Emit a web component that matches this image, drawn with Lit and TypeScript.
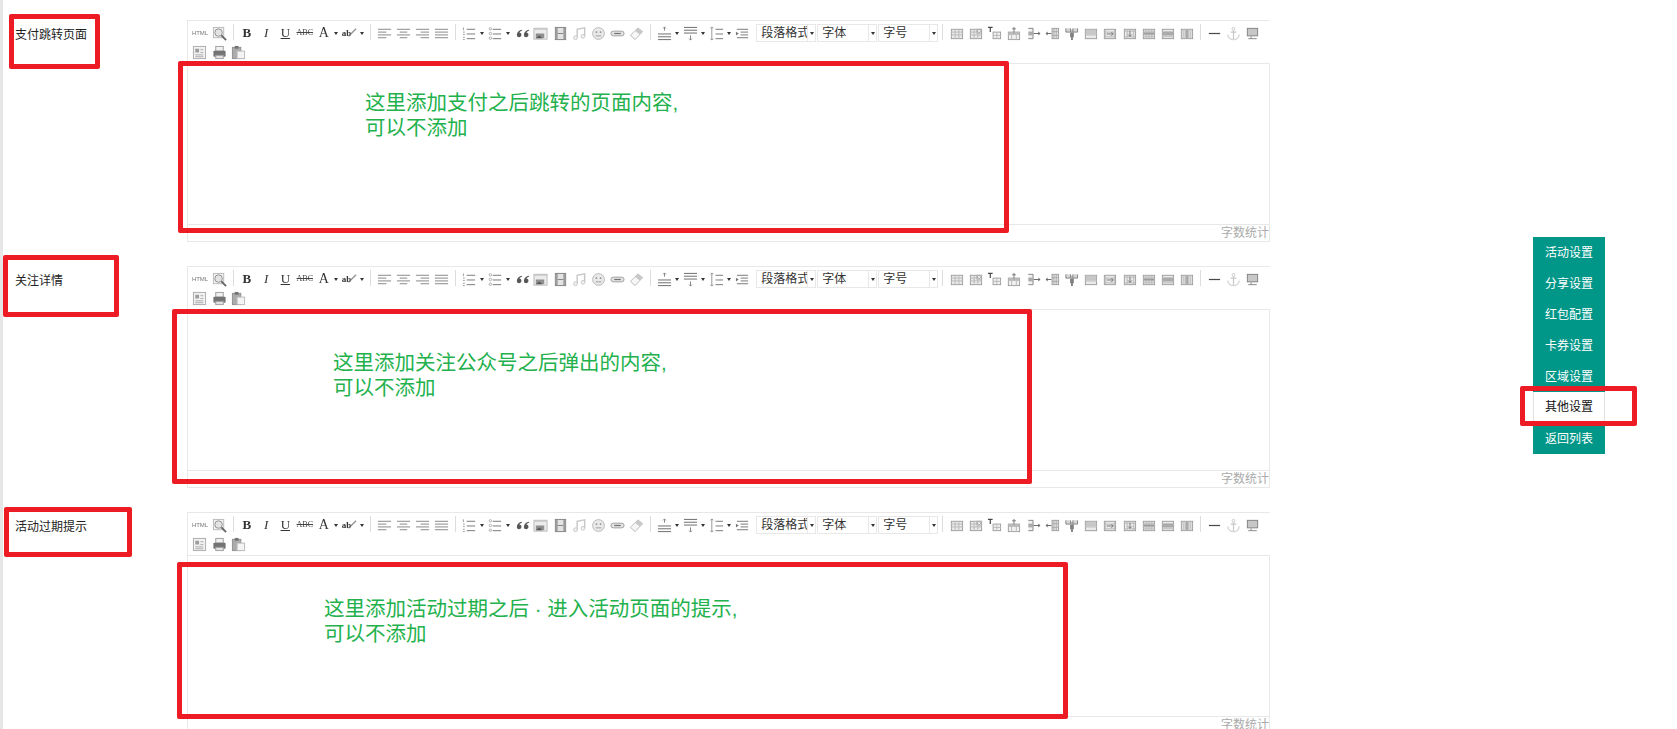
import { LitElement, html, css, svg } from "lit";
import { customElement } from "lit/decorators.js";

const lines = (ys: number[], xs: [number, number][]) =>
  ys.map((y, i) => svg`<path d="M${xs[i][0]} ${y}H${xs[i][1]}" stroke="#666" stroke-width="1" fill="none"/>`);

const align = (xs: [number, number][]) => lines([3.5, 6.5, 9.5, 12.5], xs);

const grid = (extra: any = null, cols = [6, 10], rows = [6.5, 9.5]) => svg`
  <rect x="2.5" y="3.5" width="12" height="10" fill="#e4e4e4" stroke="#888"/>
  ${cols.map((c) => svg`<path d="M${c}.5 3.5V13.5" stroke="#aaa" fill="none"/>`)}
  ${rows.map((r) => svg`<path d="M2.5 ${r}H14.5" stroke="#aaa" fill="none"/>`)}
  ${extra}`;

const ICONS: Record<string, any> = {
  preview: svg`<rect x="1.5" y="1.5" width="11" height="11" fill="#eee" stroke="#aaa"/><circle cx="7" cy="7" r="4" fill="#ddd" stroke="#777"/><path d="M10 10l5 5" stroke="#444" stroke-width="2"/>`,
  al: align([[1, 15], [1, 10], [1, 15], [1, 10]]),
  ac: align([[1, 15], [4, 12], [1, 15], [4, 12]]),
  ar: align([[1, 15], [6, 15], [1, 15], [6, 15]]),
  aj: align([[1, 15], [1, 15], [1, 15], [1, 15]]),
  ol: svg`<path d="M1.5 1.5v3M1 6.5h2M1 9h2M1 12h2M1 14.5h2" stroke="#888" fill="none"/><path d="M5 3.5h9M5 8.5h9M5 13.5h9" stroke="#555" fill="none"/>`,
  ul: svg`<circle cx="2.5" cy="3" r="1.3" fill="none" stroke="#999"/><circle cx="2.5" cy="8" r="1.3" fill="none" stroke="#999"/><circle cx="2.5" cy="13" r="1.3" fill="none" stroke="#999"/><path d="M5 3.5h9M5 8.5h9M5 13.5h9" stroke="#555" fill="none"/>`,
  quote: svg`<path d="M7 4C4 4.500 1.500 6.500 1.500 9.500a2.500 2.500 0 1 0 2.800-2.500C4.600 6 5.800 5.300 7 5ZM14.500 4C11.500 4.500 9 6.500 9 9.500a2.500 2.500 0 1 0 2.800-2.500C12.100 6 13.300 5.300 14.500 5Z" fill="#333" transform="translate(1.5 0)"/>`,
  image: svg`<rect x="1" y="2.500" width="14" height="11.500" fill="#e8e8e8" stroke="#aaa"/><rect x="1" y="2" width="14" height="2" fill="#bbb"/><rect x="3" y="8" width="9" height="5" fill="#777"/><path d="M3 13l4-3 3 3z" fill="#333"/>`,
  film: svg`<rect x="2.500" y="1.500" width="11" height="13" fill="#ddd" stroke="#666"/><rect x="3" y="2" width="2" height="12" fill="#888"/><rect x="11" y="2" width="2" height="12" fill="#888"/><path d="M5 8h6" stroke="#666"/>`,
  music: svg`<path d="M5.500 12.500V3.500l8-1.500v9" fill="none" stroke="#bbb" stroke-width="1.500"/><circle cx="3.700" cy="12.500" r="2" fill="#eee" stroke="#bbb"/><circle cx="11.700" cy="11" r="2" fill="#eee" stroke="#bbb"/>`,
  smile: svg`<circle cx="8" cy="8" r="6.300" fill="#e4e4e4" stroke="#aaa"/><circle cx="5.800" cy="6.500" r="1" fill="#777"/><circle cx="10.200" cy="6.500" r="1" fill="#777"/><path d="M5 10.500h6" stroke="#888"/>`,
  link: svg`<rect x="1" y="5.500" width="14" height="5" rx="2.500" fill="#ddd" stroke="#888"/><path d="M4.500 8h7" stroke="#555" stroke-width="1.300"/>`,
  eraser: svg`<path d="M1.500 10l8-8 5 4-8 8.500z" fill="#f4f4f4" stroke="#aaa"/><path d="M9.500 2l5 4-3 3-5-4z" fill="#bbb"/>`,
  rowb: svg`<path d="M8 1v4M6.500 2.500L8 1l1.500 1.500" stroke="#666" fill="none"/><path d="M1 8.500h14M1 11.500h14M1 14.500h14" stroke="#444" fill="none"/>`,
  rowa: svg`<path d="M1 1.500h14M1 4.500h14M1 7.500h14" stroke="#444" fill="none"/><path d="M8 10v5M6.500 13.500L8 15l1.500-1.500" stroke="#666" fill="none"/>`,
  line: svg`<path d="M3 1v14M1.500 2.500L3 1l1.500 1.500M1.500 13.500L3 15l1.500-1.500" stroke="#777" fill="none"/><path d="M7 3.500h8M7 8.500h8M7 13.500h8" stroke="#555" fill="none"/>`,
  indent: svg`<path d="M2 3.500h12M6 6.500h8M6 9.500h8M2 12.500h12" stroke="#555" fill="none"/><path d="M1 6l3 2-3 2z" fill="#555"/>`,
  t1: grid(),
  t2: grid(svg`<rect x="9" y="3" width="6" height="5" fill="#999"/><path d="M10.500 4l3 3M13.500 4l-3 3" stroke="#fff"/>`),
  t3: svg`<path d="M1 1.500h5M3.500 1.500v5" stroke="#222" stroke-width="1.300" fill="none"/><rect x="6.500" y="6.500" width="8" height="7" fill="#eee" stroke="#888"/><path d="M10.500 6.500v7M6.500 10h8" stroke="#aaa"/>`,
  t4: svg`<rect x="2.500" y="6.500" width="12" height="8" fill="#eee" stroke="#888"/><rect x="2.500" y="6.500" width="12" height="3" fill="#aaa"/><path d="M8.500 1v6M6.500 3h4" stroke="#555" fill="none"/><path d="M6 9.500v5M11 9.500v5" stroke="#aaa"/>`,
  t5: svg`<path d="M2.500 2.500h5v11h-5" fill="#eee" stroke="#666"/><path d="M2.500 6h5v4h-5z" fill="#999"/><path d="M8 8h7M13 6.500L15 8l-2 1.500" stroke="#444" fill="none"/>`,
  t6: svg`<path d="M1 8h6M3 6.500L1 8l2 1.500" stroke="#444" fill="none"/><rect x="7.500" y="2.500" width="7" height="11" fill="#ddd" stroke="#888"/><path d="M9.500 2.500v11M12 2.500v11M7.500 6h7M7.500 10h7" stroke="#999"/>`,
  t7: svg`<path d="M2 2.500v4h5v-4M9.500 2.500v4h5v-4" fill="#ccc" stroke="#666"/><path d="M8.500 4v8" stroke="#555"/><path d="M6.500 7h4v5h-1v3h-2v-3h-1z" fill="#666"/>`,
  t8: grid(svg`<rect x="3" y="4" width="11" height="5" fill="#bbb"/>`, [], [9.5]),
  t9: grid(svg`<path d="M5 8.500h7M10 6.500l2 2-2 2" stroke="#555" fill="none"/>`, [3, 13], [6.5, 11.5]),
  t10: grid(svg`<path d="M8.500 5v6M6.500 9l2 2 2-2" stroke="#555" fill="none"/>`, [5, 12], [5.5, 11.5]),
  t11: grid(svg`<rect x="3" y="7" width="11" height="2" fill="#888"/>`, [5, 8, 11], [5.5, 7.5, 9.5, 11.5]),
  t12: grid(svg`<rect x="3" y="6" width="11" height="4" fill="#999"/>`, [], [6.5, 9.5, 11.5]),
  t13: grid(svg`<rect x="7" y="4" width="3" height="9" fill="#999"/>`, [4, 6, 10, 12], []),
  hr: svg`<path d="M2 8h12" stroke="#222" stroke-width="1.300"/>`,
  anchor: svg`<circle cx="8" cy="3" r="1.500" fill="none" stroke="#bbb"/><path d="M8 4.500v10M5 6.500h6" stroke="#bbb" stroke-width="1.300"/><path d="M2 9c0 3.500 3 5.500 6 5.500s6-2 6-5.500" fill="none" stroke="#ccc" stroke-width="1.500"/>`,
  monitor: svg`<rect x="2.500" y="2.500" width="11" height="8" fill="#bbb" stroke="#666"/><path d="M6.500 11v2M3.500 13.500h9" stroke="#666" fill="none"/>`,
  tpl: svg`<rect x="1.500" y="1.500" width="13" height="13" fill="#eee" stroke="#999"/><rect x="3.500" y="4" width="4" height="4" fill="#888"/><path d="M9 5h3M9 8h3M3.500 10.500h8.500M3.500 12.500h8.500" stroke="#999"/>`,
  print: svg`<rect x="4" y="1.500" width="8" height="5" fill="#eee" stroke="#888"/><rect x="1.500" y="6" width="13" height="6.500" rx="1" fill="#555"/><rect x="4" y="11" width="8" height="3.500" fill="#ddd" stroke="#888"/>`,
  paste: svg`<rect x="1.500" y="2.500" width="9" height="12" fill="#999" stroke="#777"/><rect x="4" y="1" width="4" height="3" fill="#555"/><rect x="6.500" y="6.500" width="8" height="8" fill="#f2f2f2" stroke="#aaa"/>`,
  brush: svg`<path d="M7 12L15 4" stroke="#777" stroke-width="1.400" fill="none"/>`,
};

type Item =
  | { k: "sep" }
  | { k: "ico"; n: string; arrow?: boolean }
  | { k: "txt"; c: string; t: string; arrow?: boolean }
  | { k: "sel"; t: string };

const i = (n: string, arrow = false): Item => ({ k: "ico", n, arrow });
const t = (c: string, s: string, arrow = false): Item => ({ k: "txt", c, t: s, arrow });
const sep: Item = { k: "sep" };

const TOOLBAR: Item[] = [
  t("html", "HTML"), i("preview"), sep,
  t("b", "B"), t("it", "I"), t("u", "U"), t("abc", "ABC"), t("fa", "A", true), t("ab", "ab", true), sep,
  i("al"), i("ac"), i("ar"), i("aj"), sep,
  i("ol", true), i("ul", true), i("quote"), i("image"), i("film"), i("music"), i("smile"), i("link"), i("eraser"), sep,
  i("rowb", true), i("rowa", true), i("line", true), i("indent"),
  { k: "sel", t: "段落格式" }, { k: "sel", t: "字体" }, { k: "sel", t: "字号" }, sep,
  i("t1"), i("t2"), i("t3"), i("t4"), i("t5"), i("t6"), i("t7"), i("t8"), i("t9"), i("t10"), i("t11"), i("t12"), i("t13"), sep,
  i("hr"), i("anchor"), i("monitor"), i("tpl"), i("print"), i("paste"),
];

const SECTIONS = ["支付跳转页面", "关注详情", "活动过期提示"];
const MENU = ["活动设置", "分享设置", "红包配置", "卡券设置", "区域设置", "其他设置", "返回列表"];

const BOXES = [
  [9, 14, 91, 55], [178, 61, 831, 172],
  [3, 255, 116, 62], [172, 309, 860, 175],
  [4, 507, 128, 50], [177, 562, 891, 157],
  [1520, 386, 117, 40],
];
const NOTES = [
  { x: 365, y: 90, a: "这里添加支付之后跳转的页面内容,", b: "可以不添加" },
  { x: 333, y: 350, a: "这里添加关注公众号之后弹出的内容,", b: "可以不添加" },
  { x: 324, y: 596, a: "这里添加活动过期之后 · 进入活动页面的提示,", b: "可以不添加" },
];

@customElement("app-root")
export class AppRoot extends LitElement {
  static styles = css`
    :host {
      display: block;
      position: relative;
      height: 729px;
      overflow: hidden;
      background: #fff;
      font-family: "Liberation Sans", "Noto Sans CJK SC", sans-serif;
      font-size: 12px;
      color: #222;
    }
    .page {
      box-sizing: border-box;
      height: 729px;
      border-left: 3px solid #e6e6e6;
      padding-top: 20px;
      display: flex;
      flex-direction: column;
      gap: 24px;
    }
    .row { display: flex; flex: none; }
    .label { width: 184px; flex: none; padding: 7px 0 0 12px; box-sizing: border-box; line-height: 16px; }
    .editor { width: 1083px; flex: none; box-sizing: border-box; height: 222px; border: 1px solid #e8e8e8; border-right: 0; display: flex; flex-direction: column; }
    .toolbar { box-sizing: border-box; height: 42px; padding: 3px 0 0 2.4px; display: flex; flex-wrap: wrap; align-content: flex-start; row-gap: 1px; }
    .body { height: 160px; flex: none; border: 1px solid #e8e8e8; border-left: 0; }
    .count { flex: 1; text-align: right; color: #aaa; line-height: 17px; white-space: nowrap; overflow: hidden; border-right: 1px solid #e8e8e8; }

    .btn { width: 19.2px; height: 18px; display: flex; align-items: center; justify-content: center; flex: none; filter: blur(0.35px); }
    .btn.split { width: 26px; justify-content: flex-start; padding-left: 1.6px; box-sizing: border-box; gap: 2px; }
    .btn svg { width: 15px; height: 15px; margin: 0 0.5px; display: block; flex: none; opacity: 0.82; }
    .cap { width: 16px; flex: none; text-align: center; font-family: "Liberation Serif", serif; color: #333; line-height: 16px; white-space: nowrap; position: relative; }
    .arrow { width: 0; height: 0; flex: none; border: 2.5px solid transparent; border-top: 3px solid #333; border-bottom-width: 0; }
    .sep { width: 8.6px; height: 18px; flex: none; display: flex; justify-content: center; }
    .sep::after { content: ""; width: 1px; height: 16px; background: #ddd; }
    .html { font-family: "Liberation Sans", sans-serif; font-size: 6px; color: #777; letter-spacing: -0.1px; }
    .b { font-weight: 700; font-size: 13px; }
    .it { font-style: italic; font-size: 13px; }
    .u { text-decoration: underline; font-size: 13px; }
    .abc { text-decoration: line-through; font-size: 8px; color: #444; }
    .fa { font-size: 14px; }
    .ab { font-size: 9px; font-weight: 700; text-align: left; }
    .brush { position: absolute; left: 0; top: 0; width: 16px; height: 16px; }

    .sel { width: 60px; height: 18px; box-sizing: border-box; border: 1px solid #e8e8e8; display: flex; flex: none; margin-left: 1px; line-height: 16px; color: #333; }
    .sel:first-of-type { margin-left: 4px; }
    .sel-t { flex: 1; min-width: 0; padding-left: 4px; overflow: hidden; white-space: nowrap; }
    .sel-a { width: 7px; flex: none; border-left: 1px solid #e8e8e8; display: flex; align-items: center; justify-content: center; }

    .menu { position: absolute; left: 1533px; top: 237px; width: 72px; display: flex; flex-direction: column; background: #009688; color: #fff; }
    .menu div { height: 31px; line-height: 32px; text-align: center; box-sizing: border-box; }
    .menu .on { background: #fff; color: #111; border: 1px solid #e2e2e2; border-top: 0; line-height: 31px; }

    .box { position: absolute; box-sizing: border-box; border: 5px solid #ed1c24; border-radius: 2px; pointer-events: none; }
    .note { position: absolute; color: #22b14c; font-size: 20.5px; line-height: 25px; white-space: nowrap; }
  `;

  private item(it: Item) {
    if (it.k === "sep") return html`<span class="sep"></span>`;
    if (it.k === "sel")
      return html`<div class="sel"><span class="sel-t">${it.t}</span><span class="sel-a"><span class="arrow"></span></span></div>`;
    const arrow = it.arrow ? html`<span class="arrow"></span>` : null;
    let content;
    if (it.k === "ico") {
      content = html`<svg viewBox="0 0 16 16">${ICONS[it.n]}</svg>`;
    } else if (it.c === "ab") {
      content = html`<span class="cap ab">${it.t}<svg class="brush" viewBox="0 0 16 16">${ICONS.brush}</svg></span>`;
    } else {
      content = html`<span class="cap ${it.c}">${it.t}</span>`;
    }
    return html`<span class="btn ${it.arrow ? "split" : ""}">${content}${arrow}</span>`;
  }

  render() {
    return html`
      <div class="page">
        ${SECTIONS.map(
          (s) => html`
            <div class="row">
              <div class="label">${s}</div>
              <div class="editor">
                <div class="toolbar">${TOOLBAR.map((x) => this.item(x))}</div>
                <div class="body"></div>
                <div class="count">字数统计</div>
              </div>
            </div>
          `
        )}
      </div>
      <nav class="menu">
        ${MENU.map((m, idx) => html`<div class=${idx === 5 ? "on" : ""}>${m}</div>`)}
      </nav>
      ${NOTES.map(
        (n) => html`<div class="note" style="left:${n.x}px;top:${n.y}px">${n.a}<br />${n.b}</div>`
      )}
      ${BOXES.map(
        ([x, y, w, h]) => html`<div class="box" style="left:${x}px;top:${y}px;width:${w}px;height:${h}px"></div>`
      )}
    `;
  }
}
